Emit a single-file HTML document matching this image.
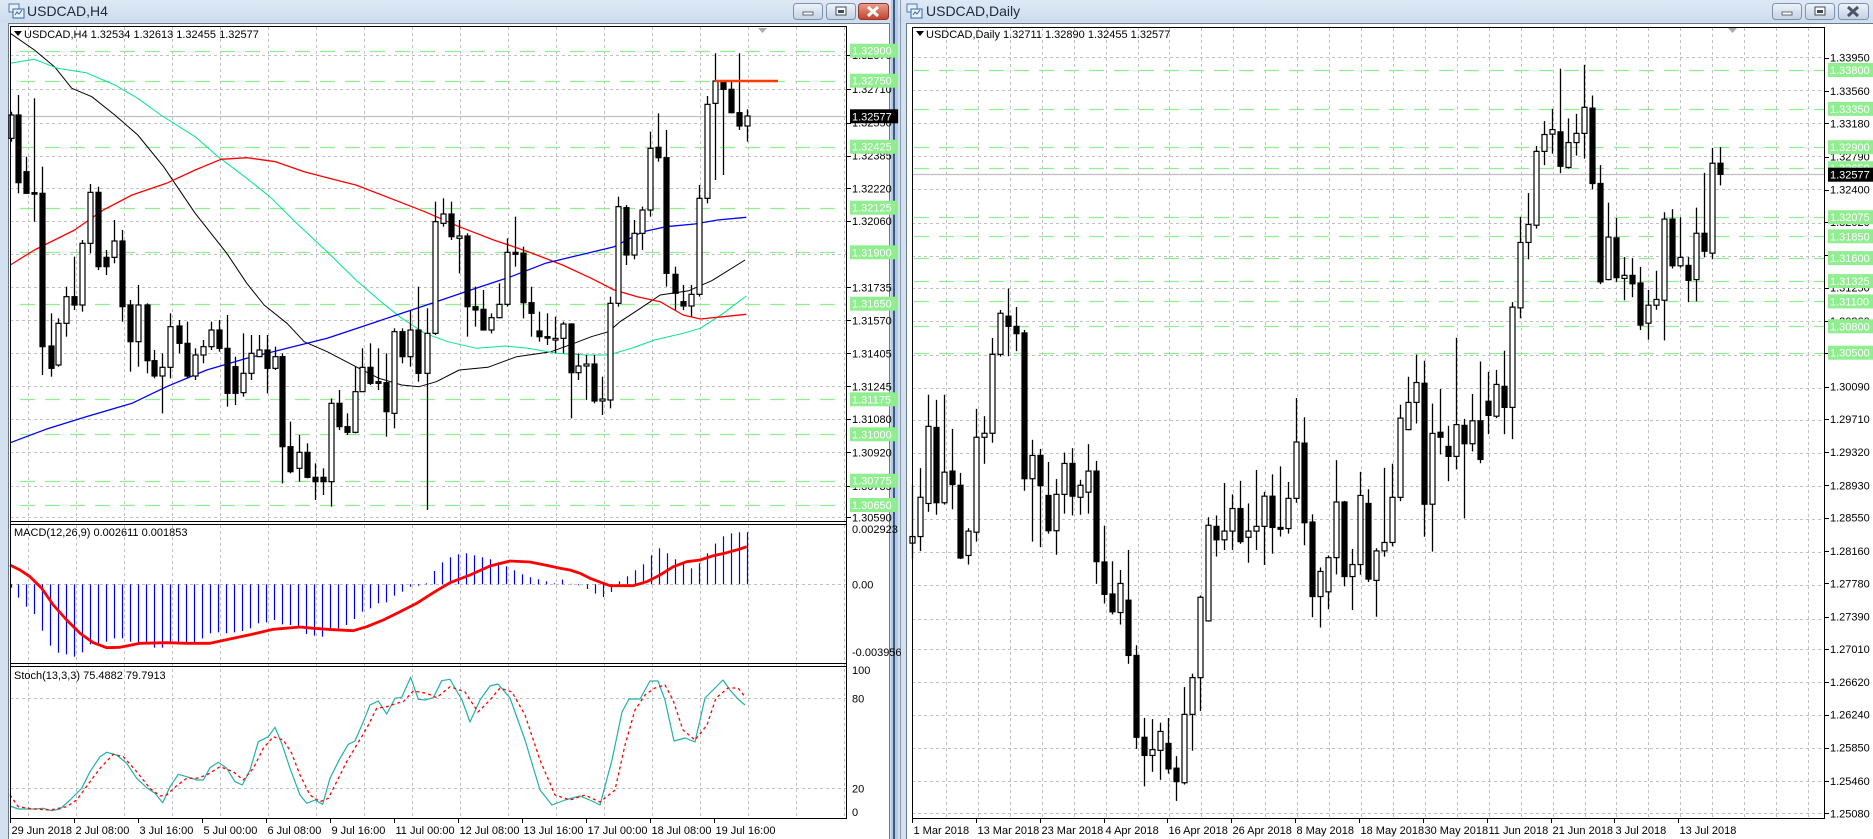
<!DOCTYPE html>
<html><head><meta charset="utf-8"><style>
html,body{margin:0;padding:0;width:1873px;height:839px;overflow:hidden;background:#cfdcec;}
svg{display:block}
text{font-family:"Liberation Sans",sans-serif;}
</style></head><body>
<svg id="s" width="1873" height="839" xmlns="http://www.w3.org/2000/svg" font-size="11">
<defs>
<linearGradient id="tb" x1="0" y1="0" x2="0" y2="1"><stop offset="0" stop-color="#dfe9f5"/><stop offset="1" stop-color="#cddcee"/></linearGradient>
<linearGradient id="bt" x1="0" y1="0" x2="0" y2="1"><stop offset="0" stop-color="#eef3f9"/><stop offset="1" stop-color="#c3d2e4"/></linearGradient>
<linearGradient id="rd" x1="0" y1="0" x2="0" y2="1"><stop offset="0" stop-color="#e8a08e"/><stop offset="1" stop-color="#c4412b"/></linearGradient>
</defs>
<!-- window backgrounds -->
<rect x="0" y="0" width="891" height="839" fill="#d3e0ef"/>
<rect x="0" y="0" width="891" height="22" fill="url(#tb)"/>
<rect x="891" y="0" width="7" height="839" fill="#b4cbe6"/>
<rect x="893" y="0" width="2" height="839" fill="#3b5a82"/>
<rect x="898" y="0" width="975" height="839" fill="#d3e0ef"/>
<rect x="898" y="0" width="975" height="22" fill="url(#tb)"/>
<line x1="900.5" y1="0" x2="900.5" y2="839" stroke="#8a9bb0"/>
<!-- title icons -->
<g transform="translate(9,4)"><rect x="0" y="0" width="10" height="8" fill="#e8f0fa" stroke="#4a78b0"/><rect x="4" y="5" width="11" height="9" fill="#eaf2fb" stroke="#2f66a8"/><path d="M6 11 l2-3 2 2 3-4" stroke="#2f66a8" fill="none"/></g>
<g transform="translate(907,4)"><rect x="0" y="0" width="10" height="8" fill="#e8f0fa" stroke="#4a78b0"/><rect x="4" y="5" width="11" height="9" fill="#eaf2fb" stroke="#2f66a8"/><path d="M6 11 l2-3 2 2 3-4" stroke="#2f66a8" fill="none"/></g>
<text x="27" y="16" font-size="14" fill="#1e2a3a">USDCAD,H4</text>
<text x="926" y="16" font-size="14" fill="#1e2a3a">USDCAD,Daily</text>
<!-- buttons left -->
<rect x="793.5" y="3.5" width="29" height="16" rx="3" fill="url(#bt)" stroke="#7f93ad"/>
<rect x="803" y="12" width="10" height="3" fill="#fff" stroke="#3d4a5c" stroke-width="0.8"/>
<rect x="826.5" y="3.5" width="29" height="16" rx="3" fill="url(#bt)" stroke="#7f93ad"/>
<rect x="836" y="7" width="10" height="8" fill="#fff" stroke="#3d4a5c"/><rect x="838" y="10" width="6" height="3" fill="#3d4a5c"/>
<rect x="858.5" y="3.5" width="30" height="16" rx="3" fill="url(#rd)" stroke="#8c3a2c"/>
<path d="M868 7 l10 9 M878 7 l-10 9" stroke="#fff" stroke-width="3"/>
<!-- buttons right -->
<rect x="1772.5" y="3.5" width="29" height="16" rx="3" fill="url(#bt)" stroke="#7f93ad"/>
<rect x="1782" y="12" width="10" height="3" fill="#fff" stroke="#3d4a5c" stroke-width="0.8"/>
<rect x="1805.5" y="3.5" width="29" height="16" rx="3" fill="url(#bt)" stroke="#7f93ad"/>
<rect x="1815" y="7" width="10" height="8" fill="#fff" stroke="#3d4a5c"/><rect x="1817" y="10" width="6" height="3" fill="#3d4a5c"/>
<rect x="1838.5" y="3.5" width="30" height="16" rx="3" fill="url(#bt)" stroke="#7f93ad"/>
<path d="M1848 7 l10 9 M1858 7 l-10 9" stroke="#4a5566" stroke-width="3"/>
<!-- client areas -->
<rect x="8.5" y="23.5" width="881" height="816" fill="#fff" stroke="#6b7888"/>
<rect x="906.5" y="23.5" width="967" height="816" fill="#fff" stroke="#6b7888"/>
<g id="dyn"></g>
<!-- headers -->
<path d="M14 31 h8 l-4 5 z" fill="#000"/>
<text x="24" y="38">USDCAD,H4  1.32534 1.32613 1.32455 1.32577</text>
<path d="M916 31 h8 l-4 5 z" fill="#000"/>
<text x="926" y="38">USDCAD,Daily  1.32711 1.32890 1.32455 1.32577</text>
<path d="M758 28 h9 l-4.5 5 z" fill="#aaa"/>
<path d="M1728 28 h9 l-4.5 5 z" fill="#aaa"/>
<text x="14" y="536">MACD(12,26,9) 0.002611 0.001853</text>
<text x="14" y="679">Stoch(13,3,3) 75.4882 79.7913</text>
<g id="lbl"></g>
</svg>
<script>
var NS="http://www.w3.org/2000/svg";
var dyn=document.getElementById('dyn'), lbl=document.getElementById('lbl');
var H='';
function ln(x1,y1,x2,y2,c,w,da){H+='<line x1="'+x1+'" y1="'+y1+'" x2="'+x2+'" y2="'+y2+'" stroke="'+c+'" stroke-width="'+(w||1)+'"'+(da?' stroke-dasharray="'+da+'"':'')+'/>';}
function pl(pts,c,w,da){H+='<polyline fill="none" points="'+pts.map(function(p){return p[0].toFixed(1)+','+p[1].toFixed(1)}).join(' ')+'" stroke="'+c+'" stroke-width="'+w+'"'+(da?' stroke-dasharray="'+da+'"':'')+' stroke-linejoin="round"/>';}
function cdl(x,hi,t,b,lo,wt){x=Math.round(x)+0.5;ln(x,hi,x,lo,'#000',1.3);if(b-t<1.5)b=t+1.5;H+='<rect x="'+(x-2.5)+'" y="'+t+'" width="5" height="'+(b-t)+'" fill="'+(wt?'#fff':'#000')+'" stroke="#000" stroke-width="1.2"/>';}
// ---------- LEFT CHART ----------
var L0=10,L1=847;
// vertical grid
for(var k=0;k<18;k++){var x=Math.round(27.6+48*k)+0.5;ln(x,27,x,818,'#c0c0c0',1,'3,3');}
// horizontal grid main
[55,89,122.7,155.7,188.3,221,253.5,287.3,320.3,353.3,386.3,419,452.3,486,517.3].forEach(function(y){y=Math.round(y)+0.5;ln(L0,y,L1,y,'#c0c0c0',1,'3,3');});
[50.7,80.7,146.7,207.7,252.3,303.7,399.3,434.3,480.7,505].forEach(function(y){y=Math.round(y)+0.5;ln(L0+10,y,L1,y,'#90ee90',1.3,'15,10');});
ln(L0,116.5,L1,116.5,'#c0c0c0',1.2);
// MAs
function zc(a){return a.map(function(p){return [p[0]/1.742,20+p[1]/3];});}
pl(zc([[18,40],[60,90],[95,140],[125,205],[160,230],[200,285],[240,345],[285,440],[340,580],[395,700],[430,790],[460,855],[500,910],[530,965],[570,995],[620,1040],[660,1075],[700,1095],[730,1100],[760,1085],[800,1050],[850,1042],[900,1010],[960,995],[1000,970],[1030,950],[1060,935],[1080,905],[1120,860],[1150,825],[1200,812],[1240,782],[1298,720]]),'#000',1);
pl(zc([[18,130],[60,118],[100,145],[150,158],[200,195],[240,235],[280,285],[340,350],[380,410],[430,475],[470,530],[520,615],[570,695],[620,780],[660,840],[700,895],[740,940],[780,965],[830,985],[880,978],[920,985],[970,1000],[1020,1005],[1060,1005],[1100,985],[1140,960],[1190,940],[1220,925],[1260,880],[1300,828]]),'#00e68a',1);
pl(zc([[18,735],[60,690],[130,630],[180,570],[230,525],[290,490],[340,450],[385,418],[430,413],[480,425],[530,455],[580,478],[620,495],[680,535],[740,575],[800,620],[860,660],[920,695],[980,735],[1030,775],[1070,810],[1110,830],[1150,845],[1190,885],[1220,897],[1260,890],[1300,883]]),'#ff0000',1.3);
pl(zc([[18,1268],[80,1228],[150,1190],[230,1150],[290,1100],[360,1050],[430,1015],[500,985],[570,955],[630,920],[700,880],[760,845],[820,810],[890,770],[950,730],[1010,705],[1070,680],[1120,635],[1160,620],[1210,612],[1250,600],[1300,592]]),'#0000ff',1.3);
// candles left
var LC=[[20,275,285,355,365,1],[32,225,285,488,520,0],[46,410,455,520,520,0],[60,235,518,522,605,0],[74,440,520,980,1065,0],[88,880,978,1045,1070,0],[101,895,910,1035,1040,1],[115,800,830,910,950,1],[129,710,830,855,870,0],[143,660,670,855,875,1],[157,492,517,670,700,1],[171,500,517,740,750,0],[185,690,712,740,765,0],[199,600,663,712,730,1],[213,630,663,860,905,0],[227,840,855,965,1055,0],[241,795,855,965,1040,1],[256,850,855,1022,1060,0],[269,990,1022,1068,1075,0],[283,1000,1042,1068,1180,1],[297,880,920,1042,1075,1],[311,900,918,970,1000,0],[325,905,970,1068,1075,0],[339,985,1005,1068,1080,1],[353,960,980,1005,1030,1],[367,905,930,980,990,1],[381,900,930,985,995,0],[395,885,985,1120,1160,0],[409,1010,1040,1120,1155,0],[423,940,1060,1118,1130,1],[437,945,1000,1060,1080,1],[451,945,990,1010,1010,1],[465,945,990,1045,1120,0],[479,980,1010,1045,1050,1],[492,1000,1010,1280,1390,0],[506,1205,1280,1355,1360,0],[520,1245,1297,1345,1385,1],[534,1270,1297,1372,1375,0],[548,1330,1372,1385,1440,0],[562,1345,1372,1385,1425,0],[576,1135,1150,1385,1460,1],[590,1110,1150,1220,1230,0],[604,1180,1220,1237,1245,0],[618,1040,1115,1237,1240,1],[631,985,1042,1115,1115,1],[645,970,1042,1090,1095,0],[659,985,1085,1090,1110,0],[673,1000,1088,1175,1250,0],[687,925,935,1180,1225,1],[701,925,935,1010,1030,0],[715,870,930,1010,1040,1],[729,800,930,1060,1085,0],[743,865,940,1060,1470,1],[757,545,605,940,945,1],[771,535,582,610,620,1],[785,545,582,650,660,0],[799,600,648,655,760,1],[813,640,648,860,950,0],[827,800,860,870,920,0],[841,810,868,930,930,0],[855,880,893,930,940,1],[869,790,853,893,895,1],[883,655,697,853,860,1],[897,590,697,703,740,0],[911,680,700,848,895,0],[925,800,848,880,950,0],[939,875,933,950,965,0],[953,880,950,953,975,0],[967,890,955,960,1000,1],[981,905,912,955,1000,1],[995,910,912,1058,1195,0],[1007,1000,1038,1058,1080,1],[1021,1005,1032,1038,1140,1],[1035,1005,1032,1143,1150,0],[1049,1070,1137,1143,1185,1],[1063,830,850,1140,1165,1],[1077,530,560,850,860,1],[1091,555,563,705,735,0],[1105,600,640,705,718,1],[1119,560,570,640,690,1],[1133,335,385,570,590,1],[1147,280,382,413,425,0],[1161,330,413,760,800,0],[1175,740,763,820,870,0],[1189,795,845,858,870,0],[1203,795,823,858,890,1],[1217,495,535,823,830,1],[1231,228,253,535,550,1],[1245,100,183,250,480,1],[1259,183,183,208,465,0],[1273,185,208,278,280,0],[1287,100,278,318,330,0],[1301,268,288,318,365,1]];
LC.forEach(function(c){cdl(c[0]/1.742,20+c[1]/3,20+c[2]/3,20+c[3]/3,20+c[4]/3,c[5]);});
ln(715,81,778,81,'#ff3c00',2.6);
// MACD
[584.5].forEach(function(y){ln(L0,y,L1,y,'#c0c0c0',1,'3,3');});
var MH=[];
[32,55,79,103,127,151,175,199,223,247,271,295,319,343,367,391,415,439,463,487,511,535,559,583,607,631,655,679,703,727,751,775,799,823,847,871,895,919,943,967,991,1015,1039,1063,1087,1111,1135,1159,1183,1207,1231,1255,1279,1303,1327].forEach(function(x,i){var v=[218,248,275,297,347,392,413,418,425,412,388,385,380,370,370,380,382,382,398,398,382,385,383,383,370,355,352,355,352,348,340,325,322,315,328,330,340,357,362,365,340,340,330,312,290,280,265,262,242,230,215,212,205,168,142][i];MH.push([x/3,515+v/3]);});
[[450,27],[458,30],[466,31],[474,29],[482,27],[490,25],[498,22],[506,18],[514,14],[522,10],[530,7],[538,5],[546,3],[554,1],[562,4.7],[571,0.5],[578,-1],[587,-4.7],[595,-9.3],[603,-12.7],[611,-7.7],[619,3],[627,8],[635,14],[643,20],[651,29],[659,36],[667,31],[675,25],[683,22],[691,16],[699,21],[707,31],[715,40.7],[723,48],[731,51],[739,52],[747,52]].forEach(function(p){MH.push([p[0],584.3-p[1]]);});
MH.forEach(function(p){var x=Math.round(p[0])+0.5;ln(x,584.3,x,p[1],'#0000ff',1.2);});
var SG=[[30,150],[60,165],[90,185],[125,220],[160,270],[200,315],[240,355],[280,383],[320,398],[360,397],[420,385],[500,383],[560,385],[630,385],[700,370],[760,357],[820,343],[900,336],[940,340],[1000,344],[1060,347],[1100,335],[1150,315],[1200,290],[1250,265],[1300,233],[1350,203]].map(function(p){return [p[0]/3,515+p[1]/3];});
SG=SG.concat([[470,575],[490,566],[510,561],[530,562],[545,565]]);
SG=SG.concat([[0,505],[30,510],[60,520],[90,535],[130,550],[150,557],[220,557],[260,545],[300,525],[340,500],[380,485],[420,480],[460,467],[500,458],[540,447],[560,440]].map(function(p){return [560+p[0]/3,400+p[1]/3];}));
pl(SG,'#ff0000',2.8);
// Stoch
ln(L0,698.5,L1,698.5,'#c0c0c0',1,'3,3');ln(L0,788.5,L1,788.5,'#c0c0c0',1,'3,3');
var SM=[[30,873],[55,882],[100,882],[130,880],[155,887],[180,882],[210,855],[245,820],[270,770],[300,725],[320,712],[350,720],[380,745],[410,790],[440,818],[465,835],[488,863],[510,815],[535,778],[560,785],[590,795],[610,795],[630,758],[655,742],[680,760],[705,800],[727,810],[750,765],[775,680],[805,665],[825,637],[845,685],[870,760],[900,840],[920,865],[945,855],[968,868],[990,790],[1020,730],[1045,688],[1065,678],[1090,620],[1110,570],[1135,558],[1160,597],[1185,550],[1205,547],[1232,487],[1255,553],[1275,555],[1300,548],[1325,497],[1350,493]].map(function(p){return [p[0]/3,515+p[1]/3];});
SM=SM.concat([[462,700],[470,722],[480,700],[490,686],[498,684],[510,698],[525,740],[540,790],[552,805],[565,800],[580,796],[592,801],[600,805],[612,760],[622,712],[629,699],[640,699],[650,681],[658,681],[665,700],[674,741],[685,738],[695,742],[705,698],[713,690],[723,680],[730,690],[738,699],[745,705]]);
var SS=[[30,840],[55,875],[100,882],[150,885],[200,875],[230,855],[270,800],[300,760],[340,718],[370,725],[410,770],[450,820],[480,843],[500,840],[530,812],[560,790],[590,790],[620,780],[660,755],[700,770],[730,795],[760,760],[790,700],[820,665],[850,675],[875,715],[900,780],[930,840],[960,860],[985,850],[1010,800],[1040,740],[1070,690],[1100,640],[1130,580],[1160,575],[1190,565],[1210,560],[1240,528],[1280,535],[1310,548],[1350,515]].map(function(p){return [p[0]/3,515+p[1]/3];});
SS=SS.concat([[465,692],[478,712],[490,700],[500,688],[512,692],[525,715],[540,760],[555,795],[570,800],[585,795],[600,802],[615,790],[625,745],[635,710],[645,695],[655,688],[665,685],[673,700],[683,730],[695,740],[707,725],[716,698],[728,688],[738,688],[746,698]]);
pl(SM,'#20b2aa',1.2);pl(SS,'#ff0000',1.3,'3,3');
// frames left
H+='<rect x="10.5" y="26.5" width="836" height="792" fill="none" stroke="#000"/>';
ln(10,521.5,847,521.5,'#000',1);ln(10,524.5,847,524.5,'#000',1);
ln(10,663.5,847,663.5,'#000',1);ln(10,666.5,847,666.5,'#000',1);
// ---------- RIGHT CHART ----------
var R0=912,R1=1825;
for(var k=-18;k<10;k++){var x=Math.round(1520.7+31.93*k)+0.5;if(x>R0&&x<R1)ln(x,28,x,818,'#c0c0c0',1,'3,3');}
[57.2,89.8,123.4,156,189.3,222.5,255.5,288,321.3,354.6,387.5,420.4,453.3,486.2,519.1,552,585.3,618.6,649,682,714.5,747.7,781,813].forEach(function(y){y=Math.round(y)+0.5;ln(R0,y,R1,y,'#c0c0c0',1,'3,3');});
[70,108.9,147.2,168.2,217.2,236.3,258.1,281.1,301.4,326.3,352.7].forEach(function(y){y=Math.round(y)+0.5;ln(R0+2,y,R1,y,'#90ee90',1.3,'15,10');});
ln(R0,174.5,R1,174.5,'#c0c0c0',1.2);
var RA=[[22,645,788,806,850,1],[46,600,680,788,828,1],[70,398,485,697,720,1],[94,412,488,695,728,0],[118,398,611,695,700,1],[142,492,608,645,713,0],[166,613,647,847,850,0],[190,765,773,840,865,1],[214,437,515,776,802,1],[238,457,504,515,588,1],[262,242,287,504,530,1],[286,165,174,287,293,1],[310,106,182,210,292,0],[334,157,210,230,278,0],[358,220,228,629,662,0],[382,522,565,629,802,1],[406,547,565,648,817,0],[430,583,675,772,780,0],[454,630,672,772,838,1],[478,557,587,672,725,1],[502,545,587,677,730,0],[526,632,647,680,728,1],[550,534,608,666,725,1],[574,580,608,857,918,0],[598,758,858,947,972,0],[622,856,946,995,1002,0],[646,880,917,997,1030,1],[670,825,963,1115,1138,0],[694,1087,1115,1340,1372,0],[718,1287,1340,1390,1475,0],[742,1290,1374,1390,1435,1],[766,1300,1324,1376,1457,1],[790,1287,1357,1427,1440,0],[814,1392,1425,1462,1515,0],[838,1202,1277,1465,1470,1],[862,1165,1176,1277,1377,1],[886,950,955,1176,1268,1],[910,735,757,1020,1022,1],[934,730,760,797,843,0],[958,641,773,797,825,1],[982,672,711,773,825,1],[1006,635,711,802,808,0],[1030,697,773,790,860,1],[1054,605,760,773,825,1],[1078,665,677,760,866,1],[1102,617,677,763,835,0],[1126,595,763,768,788,0],[1150,638,683,766,780,1],[1174,407,528,683,695,1],[1198,460,531,750,812,0],[1222,727,748,953,1010,0],[1246,873,884,953,1038,1],[1270,840,846,940,988,1],[1294,578,693,846,892,1],[1318,690,693,898,925,0],[1342,822,865,898,990,1],[1366,610,675,865,893,1],[1390,658,697,905,913,0]];
RA.forEach(function(c){cdl(905+c[0]/3,250+c[1]/2.75,250+c[2]/2.75,250+c[3]/2.75,250+c[4]/2.75,c[5]);});
var RB=[[48,1328,1335,1412,1507,1],[72,1118,1313,1335,1350,1],[96,1107,1195,1313,1323,1],[120,953,988,1195,1205,1],[144,880,947,1018,1020,1],[168,822,895,947,1002,1],[192,838,897,1213,1298,0],[216,950,1028,1213,1337,1],[240,912,1025,1038,1083,0],[264,1008,1062,1088,1153,0],[288,778,1005,1088,1122,1],[312,990,1007,1055,1250,0],[336,925,995,1055,1075,1],[360,840,995,1096,1106,0],[384,867,944,981,1030,0],[408,862,900,983,988,1],[432,812,905,960,1030,0],[456,685,698,960,1043,1],[480,462,529,700,727,1],[504,400,482,529,573,1],[528,277,291,484,493,1],[552,212,247,291,327,1],[576,180,234,246,297,1],[600,75,240,330,348,0],[624,205,268,333,336,1],[648,193,244,268,302,1],[672,65,176,244,310,1],[696,145,178,375,390,0],[720,327,375,632,638,0],[744,425,515,626,628,1],[768,465,517,621,632,0],[792,567,615,623,680,1],[816,570,615,637,672,0],[840,593,635,745,758,0],[864,653,693,740,783,1],[888,603,678,693,705,1],[912,450,468,680,785,1],[936,442,468,590,597,0],[960,463,568,590,595,1],[984,567,589,628,685,0],[1008,438,505,626,683,1],[1032,347,505,552,568,0],[1056,282,322,557,573,1],[1080,280,322,351,380,0]];
RB.forEach(function(c){var f=2.613;cdl(1360+c[0]/3,40+c[1]/f,40+c[2]/f,40+c[3]/f,40+c[4]/f,c[5]);});
H+='<rect x="912.5" y="27.5" width="912" height="791" fill="none" stroke="#000"/>';
dyn.innerHTML=H;
</script>
<script>
var G='';
function lab(x,y,t,bg,fg){if(bg)G+='<rect x="'+(x-2)+'" y="'+(y-7)+'" width="'+(t.length*6.3+4)+'" height="14" fill="'+bg+'"/>';G+='<text x="'+x+'" y="'+(y+4)+'" fill="'+fg+'">'+t+'</text>';}
function tick(x,y){G+='<line x1="'+x+'" y1="'+y+'" x2="'+(x+4)+'" y2="'+y+'" stroke="#000"/>';}
[['1.32875',55],['1.32710',89],['1.32550',122.7],['1.32385',155.7],['1.32220',188.3],['1.32060',221],['1.31735',287.3],['1.31570',320.3],['1.31405',353.3],['1.31245',386.3],['1.31080',419],['1.30920',452.3],['1.30735',486],['1.30590',517.3]].forEach(function(a){tick(847,Math.round(a[1])+0.5);lab(852,a[1],a[0],null,'#000');});
[['1.32900',50.7],['1.32750',80.7],['1.32425',146.7],['1.32125',207.7],['1.31900',252.3],['1.31650',303.7],['1.31175',399.3],['1.31000',434.3],['1.30775',480.7],['1.30650',505]].forEach(function(a){lab(852,a[1],a[0],'#90ee90','#fff');});
lab(852,116.3,'1.32577','#000','#fff');
lab(852,529,'0.002923',null,'#000');lab(852,584.3,'0.00',null,'#000');lab(852,652,'-0.003956',null,'#000');
lab(852,670,'100',null,'#000');lab(852,698.5,'80',null,'#000');lab(852,788.5,'20',null,'#000');lab(852,812,'0',null,'#000');
[['1.33950',57.7],['1.33560',90.9],['1.33180',123.3],['1.32790',156.5],['1.32400',189.7],['1.32020',222.1],['1.31630',255.3],['1.31250',287.7],['1.30860',320.9],['1.30480',353.3],['1.30090',386.5],['1.29710',418.8],['1.29320',452.1],['1.28930',485.3],['1.28550',517.7],['1.28160',550.9],['1.27780',583.3],['1.27390',616.5],['1.27010',648.9],['1.26620',682.1],['1.26240',714.5],['1.25850',747.7],['1.25460',780.9],['1.25080',813.3]].forEach(function(a){tick(1825,Math.round(a[1])+0.5);lab(1830,a[1],a[0],null,'#000');});
[['1.33800',70],['1.33350',108.9],['1.32900',147.2],['1.32650',168.2],['1.32075',217.2],['1.31850',236.3],['1.31600',258.1],['1.31325',281.1],['1.31100',301.4],['1.30800',326.3],['1.30500',352.7]].forEach(function(a){lab(1830,a[1],a[0],'#90ee90','#fff');});
lab(1830,174.7,'1.32577','#000','#fff');
['29 Jun 2018','2 Jul 08:00','3 Jul 16:00','5 Jul 00:00','6 Jul 08:00','9 Jul 16:00','11 Jul 00:00','12 Jul 08:00','13 Jul 16:00','17 Jul 00:00','18 Jul 08:00','19 Jul 16:00'].forEach(function(t,i){var x=Math.round(10+64*i)+0.5;G+='<line x1="'+x+'" y1="818" x2="'+x+'" y2="823" stroke="#000"/><text x="'+(x+1)+'" y="834">'+t+'</text>';});
['1 Mar 2018','13 Mar 2018','23 Mar 2018','4 Apr 2018','16 Apr 2018','26 Apr 2018','8 May 2018','18 May 2018','30 May 2018','11 Jun 2018','21 Jun 2018','3 Jul 2018','13 Jul 2018'].forEach(function(t,i){var x=Math.round(912+63.86*i)+0.5;G+='<line x1="'+x+'" y1="818" x2="'+x+'" y2="823" stroke="#000"/><text x="'+(x+1)+'" y="834">'+t+'</text>';});
document.getElementById('lbl').innerHTML=G;
</script>
</body></html>
